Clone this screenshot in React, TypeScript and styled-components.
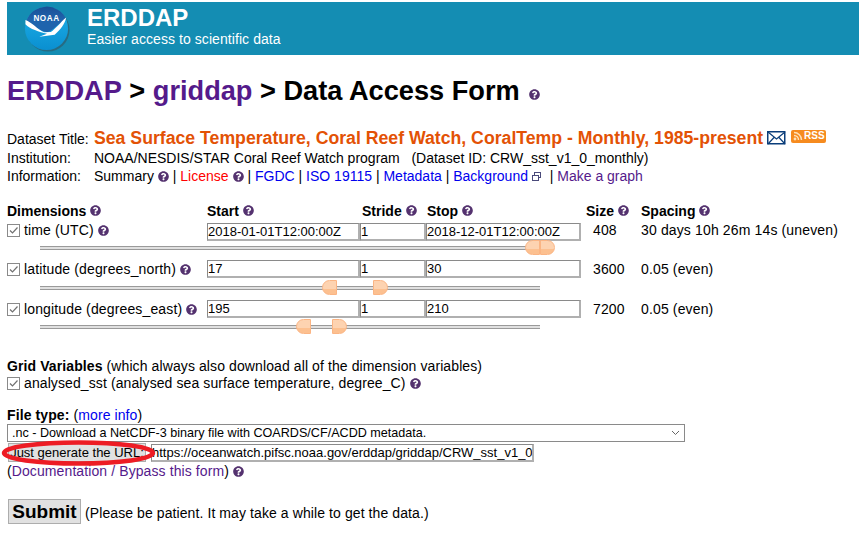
import React from "react"
import styled, { createGlobalStyle } from "styled-components"
import { FaQuestionCircle } from "react-icons/fa"

const GlobalStyle = createGlobalStyle`
  html, body {
    margin: 0;
    padding: 0;
    background: #fff;
    color: #000;
    font-family: "Liberation Sans", Arial, sans-serif;
    font-size: 14px;
  }
`

const Page = styled.div`
  width: 859px;
  height: 537px;
  overflow: hidden;
  padding-top: 2px;
  box-sizing: border-box;
`

const Banner = styled.header`
  margin-left: 7px;
  height: 53px;
  background: #148db3;
  display: flex;
  align-items: center;
  color: #fff;
`

const LogoWrap = styled.div`
  width: 80px;
  flex: none;
  display: flex;
  justify-content: center;
  box-sizing: border-box;
`

const BannerText = styled.div`
  display: flex;
  flex-direction: column;
  padding-bottom: 6px;
`

const BannerTitle = styled.div`
  font-size: 24px;
  font-weight: bold;
  line-height: 27px;
`

const BannerSub = styled.div`
  font-size: 14px;
  line-height: 17px;
  letter-spacing: 0.07px;
`

const Heading = styled.h1`
  margin: 18px 0 0 7px;
  font-size: 27.2px;
  line-height: 36px;
  font-weight: bold;
  display: flex;
  align-items: center;
  white-space: pre;
`

const HeadLink = styled.a`
  color: #551a8b;
`

const InfoBlock = styled.section`
  margin: 19px 0 0 7px;
  display: grid;
  grid-template-columns: 87px 1fr;
  align-items: center;
`

const InfoLabel = styled.div`
  line-height: 18px;
`

const InfoValue = styled.div`
  line-height: 18px;
  display: flex;
  align-items: center;
  white-space: pre;
`

const DatasetTitle = styled.span`
  font-size: 17.68px;
  font-weight: bold;
  color: #e35205;
  line-height: 21px;
`

const Link = styled.a<{ $tone?: "blue" | "red" | "purple" }>`
  color: ${(p) => (p.$tone === "red" ? "#f00" : p.$tone === "purple" ? "#551a8b" : "#00e")};
`

const Help = styled(FaQuestionCircle)`
  color: #54326f;
  width: 11px;
  height: 11px;
  flex: none;
  margin-left: 4px;
`

const HeadingHelp = styled(Help)`
  margin-left: 9px;
  margin-top: 7px;
`

const Table = styled.section`
  margin: 17px 0 0 7px;
  width: 852px;
`

const Row = styled.div`
  display: grid;
  grid-template-columns: 200px 153px 66px 155px 60px 1fr;
  align-items: center;
  height: 18px;
  letter-spacing: 0.14px;
`

const TitleRow = styled(Row)`
  height: 17px;
  margin-bottom: 3px;
  letter-spacing: 0;
`

const Th = styled.div<{ $inset?: number }>`
  font-weight: bold;
  display: flex;
  align-items: center;
  padding-left: ${(p) => p.$inset ?? 0}px;
  white-space: pre;
`

const Td = styled.div<{ $inset?: number; $lift?: number }>`
  display: flex;
  align-items: center;
  padding-left: ${(p) => p.$inset ?? 0}px;
  margin-bottom: ${(p) => p.$lift ?? 0}px;
  white-space: pre;
`

const Field = styled.div`
  height: 18px;
  box-sizing: border-box;
  border-style: solid;
  border-width: 1px 2px 2px 1px;
  border-color: #8a8a8a #b0b0b0 #b0b0b0 #8a8a8a;
  background: #fff;
  font-size: 13px;
  line-height: 16px;
  white-space: pre;
  overflow: hidden;
  letter-spacing: 0;
`

const Check = styled.span`
  width: 13px;
  height: 13px;
  box-sizing: border-box;
  border: 1px solid #8a8a8a;
  background: #fff;
  display: inline-flex;
  align-items: center;
  justify-content: center;
  margin-right: 4px;
  flex: none;
`

const Slider = styled.div<{ $before: number; $after: number }>`
  position: relative;
  margin: ${(p) => p.$before}px 0 ${(p) => p.$after}px 33px;
  height: 15px;
  width: 500px;
  display: flex;
  align-items: center;
`

const Track = styled.div`
  width: 100%;
  height: 4px;
  box-sizing: border-box;
  background: #e0e0e0;
  border-top: 1px solid #9a9a9a;
  border-bottom: 1px solid #9a9a9a;
`

const Handle = styled.span<{ $side: "left" | "right"; $at: number }>`
  position: absolute;
  top: 0;
  left: ${(p) => p.$at}px;
  width: 15px;
  height: 15px;
  box-sizing: border-box;
  border: 1px solid #fbb584;
  background: linear-gradient(#fdd3b1 0 60%, #fcc090 60% 100%);
  border-radius: ${(p) => (p.$side === "left" ? "8px 0 0 8px" : "0 8px 8px 0")};
`

const Section = styled.section<{ $top: number }>`
  margin: ${(p) => p.$top}px 0 0 7px;
`

const Line = styled.div<{ $top?: number }>`
  margin-top: ${(p) => p.$top ?? 0}px;
  line-height: 17px;
  display: flex;
  align-items: center;
  white-space: pre;
  letter-spacing: 0.1px;
`

const Bold = styled.b`
  font-weight: bold;
`

const SelectBox = styled.div`
  width: 678px;
  height: 18px;
  box-sizing: border-box;
  border: 1px solid #8a8a8a;
  background: #fff;
  display: flex;
  align-items: center;
  justify-content: space-between;
  padding: 0 4px 0 4px;
  font-size: 12.6px;
`

const UrlRow = styled.div`
  position: relative;
  margin-top: 1px;
  height: 19px;
  display: flex;
  align-items: center;
`

const GenButton = styled.div`
  margin-left: 1px;
  width: 138px;
  height: 19px;
  box-sizing: border-box;
  background: #e1e1e1;
  border: 1px solid #adadad;
  font-size: 13px;
  line-height: 17px;
  text-align: center;
  white-space: pre;
`

const UrlField = styled(Field)`
  margin-left: 5px;
  width: 383px;
`

const Ring = styled.svg`
  position: absolute;
  left: -7px;
  top: -3px;
`

const SubmitRow = styled.div`
  margin: 19px 0 0 8px;
  display: flex;
  align-items: center;
  letter-spacing: 0.09px;
`

const SubmitButton = styled.div`
  width: 73px;
  height: 25px;
  box-sizing: border-box;
  background: #e1e1e1;
  border: 1px solid #adadad;
  font-size: 19px;
  font-weight: bold;
  line-height: 23px;
  text-align: center;
  margin-right: 4px;
  letter-spacing: 0;
`

const SubmitNote = styled.span`
  padding-top: 2px;
`

const Logo = () => (
  <svg width="46" height="46" viewBox="0 0 48 48">
    <defs>
      <linearGradient id="noaaSky" x1="0" y1="0" x2="0" y2="1">
        <stop offset="0" stopColor="#1b4f96" />
        <stop offset="0.5" stopColor="#1f64ad" />
      </linearGradient>
      <linearGradient id="noaaSea" x1="0" y1="0" x2="0" y2="1">
        <stop offset="0" stopColor="#1fb2ea" />
        <stop offset="1" stopColor="#0a8fd0" />
      </linearGradient>
    </defs>
    <circle cx="25" cy="25" r="22.5" fill="#2f5d6e" opacity="0.7" />
    <circle cx="23.5" cy="23.5" r="22.5" fill="url(#noaaSea)" />
    <path d="M2.5 15.5 A22.5 22.5 0 0 1 44 13.5 C36 18 30 26 24 27.5 C16 26 9 20 2.5 15.5Z" fill="url(#noaaSky)" />
    <path d="M1.5 14.5 C8 17 14 24 21 27.5 L28 27 C33 24 38 17 44 12 C43 18 38 25 32 30 L16 32 L24 29 C16 27 6 24 1.5 19Z" fill="#fff" />
    <text x="23.5" y="15.5" textAnchor="middle" fontFamily="'Liberation Sans', sans-serif" fontSize="8.5" fontWeight="bold" fill="#fff" letterSpacing="0.6">NOAA</text>
  </svg>
)

const CheckMark = () => (
  <svg width="11" height="11" viewBox="0 0 11 11">
    <path d="M2 5.5 L4.5 8 L9.5 2.5" fill="none" stroke="#707070" strokeWidth="1.2" />
  </svg>
)

const EnvelopeSvg = styled.svg`
  margin: -2px 0 0 4px;
  flex: none;
`

const Envelope = () => (
  <EnvelopeSvg width="19" height="14" viewBox="0 0 19 14">
    <rect x="0.75" y="0.75" width="17" height="12" fill="#fff" stroke="#0a3d7a" strokeWidth="1.5" />
    <path d="M1 1 L9.5 8 L18 1 M1 13 L7 6.5 M18 13 L12 6.5" fill="none" stroke="#0a3d7a" strokeWidth="1.2" />
  </EnvelopeSvg>
)

const RssBadge = styled.span`
  margin: -5px 0 0 5px;
  width: 35px;
  height: 13px;
  border-radius: 2px;
  background: #f68b1f;
  color: #fff;
  font-size: 10px;
  font-weight: bold;
  display: inline-flex;
  align-items: center;
  gap: 1px;
  padding-left: 2px;
  box-sizing: border-box;
`

const RssIcon = () => (
  <svg width="10" height="10" viewBox="0 0 10 10">
    <circle cx="2" cy="8" r="1.4" fill="#ffe0b8" />
    <path d="M1 4.5 A4.5 4.5 0 0 1 5.5 9 M1 1.5 A7.5 7.5 0 0 1 8.5 9" fill="none" stroke="#ffe0b8" strokeWidth="1.5" />
  </svg>
)

const ExternalSvg = styled.svg`
  margin-left: 3px;
  flex: none;
`

const ExternalIcon = () => (
  <ExternalSvg width="11" height="11" viewBox="0 0 11 11">
    <rect x="3.5" y="1.5" width="6" height="5" fill="#fff" stroke="#4a4a7a" />
    <rect x="1.5" y="4.5" width="6" height="5" fill="#fff" stroke="#4a4a7a" />
  </ExternalSvg>
)

const Chevron = () => (
  <svg width="9" height="6" viewBox="0 0 9 6">
    <path d="M1 1 L4.5 4.5 L8 1" fill="none" stroke="#666" strokeWidth="1" />
  </svg>
)

const dimensions = [
  { name: "latitude (degrees_north)", start: "17", stop: "30", size: "3600", spacing: "0.05 (even)", lo: 282, hi: 333, before: 2, after: 5 },
  { name: "longitude (degrees_east)", start: "195", stop: "210", size: "7200", spacing: "0.05 (even)", lo: 256, hi: 292, before: 1, after: 0 },
]

export default function App() {
  return (
    <Page>
      <GlobalStyle />
      <Banner>
        <LogoWrap>
          <Logo />
        </LogoWrap>
        <BannerText>
          <BannerTitle>ERDDAP</BannerTitle>
          <BannerSub>Easier access to scientific data</BannerSub>
        </BannerText>
      </Banner>

      <Heading>
        <HeadLink>ERDDAP</HeadLink> &gt; <HeadLink>griddap</HeadLink> &gt; Data Access Form
        <HeadingHelp />
      </Heading>

      <InfoBlock>
        <InfoLabel>Dataset Title:</InfoLabel>
        <InfoValue>
          <DatasetTitle>Sea Surface Temperature, Coral Reef Watch, CoralTemp - Monthly, 1985-present</DatasetTitle>
          <Envelope />
          <RssBadge>
            <RssIcon />
            RSS
          </RssBadge>
        </InfoValue>
        <InfoLabel>Institution:</InfoLabel>
        <InfoValue>NOAA/NESDIS/STAR Coral Reef Watch program   (Dataset ID: CRW_sst_v1_0_monthly)</InfoValue>
        <InfoLabel>Information:</InfoLabel>
        <InfoValue>
          Summary
          <Help />
          {" | "}
          <Link $tone="red">License</Link>
          <Help />
          {" | "}
          <Link>FGDC</Link>
          {" | "}
          <Link>ISO 19115</Link>
          {" | "}
          <Link>Metadata</Link>
          {" | "}
          <Link>Background</Link>
          <ExternalIcon />
          {"  | "}
          <Link $tone="purple">Make a graph</Link>
        </InfoValue>
      </InfoBlock>

      <Table>
        <TitleRow>
          <Th>
            Dimensions
            <Help />
          </Th>
          <Th>
            Start
            <Help />
          </Th>
          <Th $inset={2}>
            Stride
            <Help />
          </Th>
          <Th $inset={1}>
            Stop
            <Help />
          </Th>
          <Th $inset={5}>
            Size
            <Help />
          </Th>
          <Th>
            Spacing
            <Help />
          </Th>
        </TitleRow>

        <Row>
          <Td $lift={3}>
            <Check>
              <CheckMark />
            </Check>
            time (UTC)
            <Help />
          </Td>
          <Field>2018-01-01T12:00:00Z</Field>
          <Field>1</Field>
          <Field>2018-12-01T12:00:00Z</Field>
          <Td $inset={12} $lift={3}>408</Td>
          <Td $lift={3}>30 days 10h 26m 14s (uneven)</Td>
        </Row>
        <Slider $before={0} $after={5}>
          <Track />
          <Handle $side="left" $at={485} />
          <Handle $side="right" $at={500} />
        </Slider>

        {dimensions.map((d) => (
          <React.Fragment key={d.name}>
            <Row>
              <Td>
                <Check>
                  <CheckMark />
                </Check>
                {d.name}
                <Help />
              </Td>
              <Field>{d.start}</Field>
              <Field>1</Field>
              <Field>{d.stop}</Field>
              <Td $inset={12}>{d.size}</Td>
              <Td>{d.spacing}</Td>
            </Row>
            <Slider $before={d.before} $after={d.after}>
              <Track />
              <Handle $side="left" $at={d.lo} />
              <Handle $side="right" $at={d.hi} />
            </Slider>
          </React.Fragment>
        ))}
      </Table>

      <Section $top={24}>
        <Line>
          <Bold>Grid Variables</Bold> (which always also download all of the dimension variables)
        </Line>
        <Line>
          <Check>
            <CheckMark />
          </Check>
          analysed_sst (analysed sea surface temperature, degree_C)
          <Help />
        </Line>
      </Section>

      <Section $top={15}>
        <Line>
          <Bold>File type:</Bold> (<Link>more info</Link>)
        </Line>
        <SelectBox>
          .nc - Download a NetCDF-3 binary file with COARDS/CF/ACDD metadata.
          <Chevron />
        </SelectBox>
        <UrlRow>
          <GenButton>Just generate the URL:</GenButton>
          <UrlField>https://oceanwatch.pifsc.noaa.gov/erddap/griddap/CRW_sst_v1_0</UrlField>
          <Ring width="157" height="26" viewBox="0 0 157 26">
            <ellipse cx="78.5" cy="13" rx="74.5" ry="10.5" fill="none" stroke="#ed1c24" strokeWidth="4.5" />
          </Ring>
        </UrlRow>
        <Line $top={1}>
          <span>(</span>
          <Link $tone="purple">Documentation / Bypass this form</Link>
          <span>)</span>
          <Help />
        </Line>
      </Section>

      <SubmitRow>
        <SubmitButton>Submit</SubmitButton>
        <SubmitNote>(Please be patient. It may take a while to get the data.)</SubmitNote>
      </SubmitRow>
    </Page>
  )
}
